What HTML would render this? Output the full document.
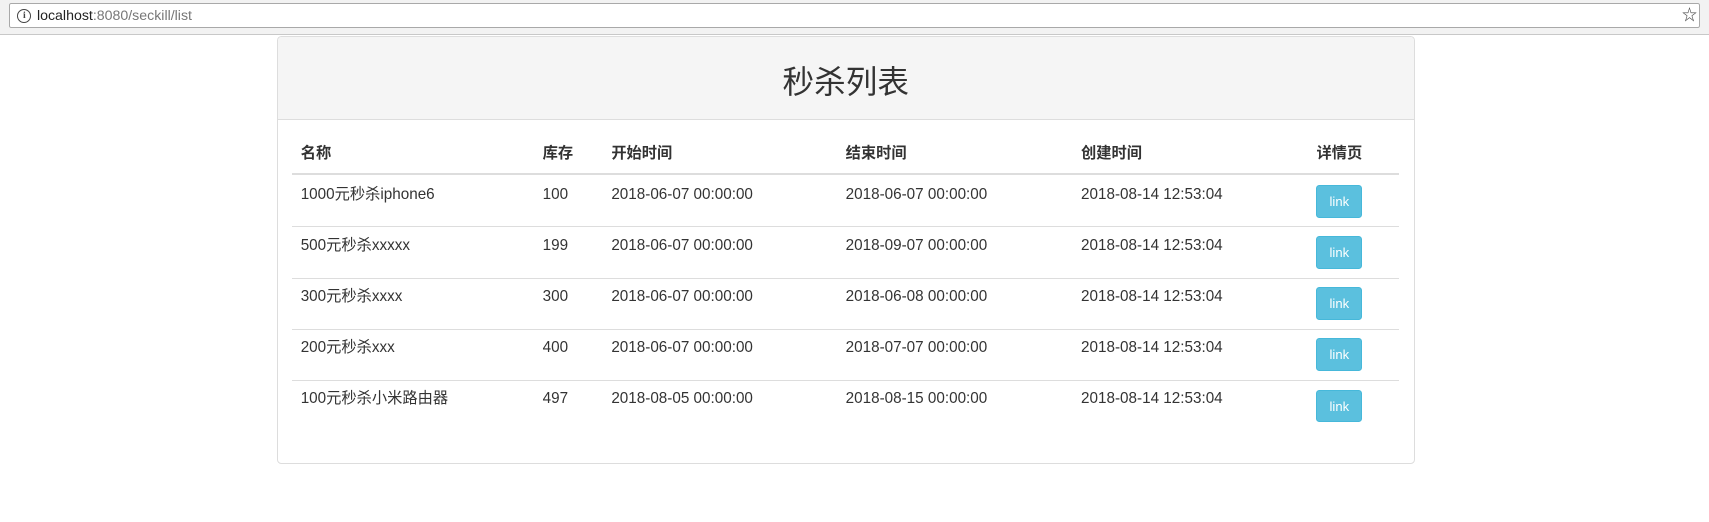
<!DOCTYPE html>
<html><head><meta charset="utf-8"><style>
html,body{margin:0;padding:0;background:#fff;overflow:hidden}
#w{zoom:1.0899;width:1568px;height:479px;position:relative;font-family:"Liberation Sans","Noto Sans CJK SC",sans-serif;color:#333;font-size:14px}
.bar{position:absolute;left:0;top:0;width:1568px;height:31px;background:#f2f2f2;border-bottom:1px solid #c8c8c8}
.url{position:absolute;left:8px;top:3px;width:1552px;height:23px;background:#fff;border:1px solid #a9a9a9;border-radius:2px;box-sizing:border-box}
.url .i{position:absolute;left:7px;top:4px;width:11px;height:11px;border:1.3px solid #444;border-radius:50%;font:bold 9px/11px "Liberation Serif",serif;text-align:center;color:#444}
.url .t{position:absolute;left:25px;top:3px;font-size:13px;color:#222}
.url .t span{color:#777}
.url .s{position:absolute;right:2px;top:1px;font-size:14px;line-height:20px;color:#444}
.panel{position:absolute;left:254px;top:33px;width:1044px;height:393px;border:1px solid #ddd;border-radius:4px;box-sizing:border-box;overflow:hidden}
.hd{height:76px;background:#f5f5f5;border-bottom:1px solid #ddd;box-sizing:border-box;text-align:center;font-size:29px;line-height:84px;color:#333}
table{position:absolute;left:13px;top:89px;width:1016px;border-collapse:collapse}
th,td{padding:8px;text-align:left;line-height:20px;vertical-align:top;box-sizing:border-box}
th{font-weight:bold;border-bottom:2px solid #ddd;height:37px}
td{border-top:1px solid #ddd;height:46px;padding-top:7px}
tr:nth-child(2) td{border-top:0;padding-top:8px}
.b{display:inline-block;width:42px;height:30px;background:#5bc0de;border:1px solid #46b8da;border-radius:3px;color:#fff;text-align:center;line-height:30px;font-size:12px;box-sizing:border-box;margin-top:1px}
</style></head><body><div id="w">
<div class="bar"><div class="url"><div class="i">i</div><div class="t">localhost<span>:8080/seckill/list</span></div><div class="s">☆</div></div></div>
<div class="panel"><div class="hd">秒杀列表</div>
<table>
<colgroup><col style="width:222px"><col style="width:63px"><col style="width:215px"><col style="width:216px"><col style="width:216px"><col></colgroup>
<tr><th>名称</th><th>库存</th><th>开始时间</th><th>结束时间</th><th>创建时间</th><th>详情页</th></tr>
<tr><td>1000元秒杀iphone6</td><td>100</td><td>2018-06-07 00:00:00</td><td>2018-06-07 00:00:00</td><td>2018-08-14 12:53:04</td><td><span class="b">link</span></td></tr>
<tr><td>500元秒杀xxxxx</td><td>199</td><td>2018-06-07 00:00:00</td><td>2018-09-07 00:00:00</td><td>2018-08-14 12:53:04</td><td><span class="b">link</span></td></tr>
<tr><td>300元秒杀xxxx</td><td>300</td><td>2018-06-07 00:00:00</td><td>2018-06-08 00:00:00</td><td>2018-08-14 12:53:04</td><td><span class="b">link</span></td></tr>
<tr><td>200元秒杀xxx</td><td>400</td><td>2018-06-07 00:00:00</td><td>2018-07-07 00:00:00</td><td>2018-08-14 12:53:04</td><td><span class="b">link</span></td></tr>
<tr><td>100元秒杀小米路由器</td><td>497</td><td>2018-08-05 00:00:00</td><td>2018-08-15 00:00:00</td><td>2018-08-14 12:53:04</td><td><span class="b">link</span></td></tr>
</table></div>
</div></body></html>
